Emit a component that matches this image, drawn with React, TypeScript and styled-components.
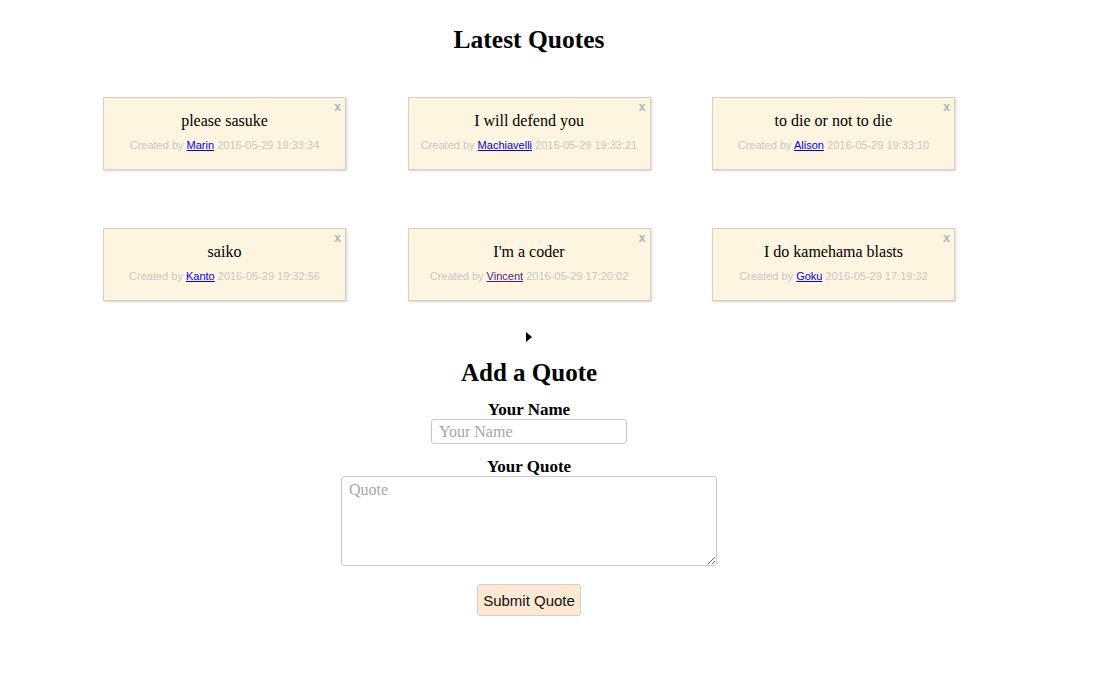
import React from "react";
import styled, { createGlobalStyle } from "styled-components";

const Global = createGlobalStyle`
  html, body { margin: 0; padding: 0; background: #fff; }
  body { font-family: "Liberation Serif", "Times New Roman", serif; color: #000; }
`;

const Page = styled.div`
  width: 1042px;
  margin: 0 0 0 8px;
  padding-top: 26px;
  display: flex;
  flex-direction: column;
  align-items: center;
`;

const Title = styled.h2`
  margin: 0;
  font-size: 25.5px;
  line-height: 28px;
  font-weight: bold;
`;

const Grid = styled.div`
  margin-top: 43px;
  display: grid;
  grid-template-columns: repeat(3, 243px);
  column-gap: 61.5px;
  row-gap: 58px;
`;

const Card = styled.div`
  position: relative;
  box-sizing: border-box;
  height: 73px;
  background: #fdf5df;
  border: 1px solid #d4d0c8;
  box-shadow: 1px 1px 2px rgba(0, 0, 0, 0.18);
  text-align: center;
  padding-top: 13px;
`;

const Close = styled.span`
  position: absolute;
  top: 2px;
  right: 4px;
  font-family: "Liberation Sans", Arial, sans-serif;
  font-size: 12px;
  font-weight: bold;
  color: #b3b3b3;
`;

const QuoteText = styled.div`
  font-size: 16px;
  line-height: 20px;
`;

const Meta = styled.div`
  margin-top: 7px;
  font-family: "Liberation Sans", Arial, sans-serif;
  font-size: 11px;
  line-height: 14px;
  color: #c8c8c8;
`;

const Author = styled.a<{ $visited?: boolean }>`
  color: ${(p) => (p.$visited ? "#551a8b" : "#0000ee")};
  text-decoration: underline;
`;

const Toggle = styled.div`
  margin-top: 31px;
  width: 0;
  height: 0;
  border-top: 5px solid transparent;
  border-bottom: 5px solid transparent;
  border-left: 6px solid #000;
`;

const SubTitle = styled(Title)`
  margin-top: 17px;
  font-size: 25px;
`;

const Label = styled.label<{ $top: number }>`
  display: block;
  margin-top: ${(p) => p.$top}px;
  font-size: 17px;
  line-height: 16px;
  font-weight: bold;
`;

const NameInput = styled.input`
  box-sizing: border-box;
  width: 196px;
  height: 25px;
  margin-top: 1px;
  border: 1px solid #c9c9c9;
  border-radius: 3px;
  padding: 1px 7px;
  font-family: "Liberation Serif", serif;
  font-size: 16px;
  outline: none;
  &::placeholder { color: #a6a6a6; }
`;

const QuoteArea = styled.textarea`
  box-sizing: border-box;
  width: 376px;
  height: 90px;
  margin-top: 1px;
  border: 1px solid #c9c9c9;
  border-radius: 3px;
  padding: 4px 7px;
  font-family: "Liberation Serif", serif;
  font-size: 16px;
  outline: none;
  resize: both;
  &::placeholder { color: #a6a6a6; }
`;

const Submit = styled.button`
  margin-top: 18px;
  box-sizing: border-box;
  width: 104px;
  height: 32px;
  background: #fde9d3;
  border: 1px solid #cfcfcf;
  border-radius: 3px;
  font-family: "Liberation Sans", Arial, sans-serif;
  font-size: 15px;
  color: #111;
  padding: 0;
`;

const Form = styled.div`
  display: flex;
  flex-direction: column;
  align-items: center;
`;

type Q = { text: string; author: string; date: string; visited?: boolean };

const quotes: Q[] = [
  { text: "please sasuke", author: "Marin", date: "2016-05-29 19:33:34" },
  { text: "I will defend you", author: "Machiavelli", date: "2016-05-29 19:33:21" },
  { text: "to die or not to die", author: "Alison", date: "2016-05-29 19:33:10" },
  { text: "saiko", author: "Kanto", date: "2016-05-29 19:32:56" },
  { text: "I'm a coder", author: "Vincent", date: "2016-05-29 17:20:02", visited: true },
  { text: "I do kamehama blasts", author: "Goku", date: "2016-05-29 17:19:32" },
];

export default function App() {
  return (
    <>
      <Global />
      <Page>
        <Title>Latest Quotes</Title>
        <Grid>
          {quotes.map((q) => (
            <Card key={q.author}>
              <Close>x</Close>
              <QuoteText>{q.text}</QuoteText>
              <Meta>
                Created by <Author href="#" $visited={q.visited}>{q.author}</Author> {q.date}
              </Meta>
            </Card>
          ))}
        </Grid>
        <Toggle />
        <SubTitle>Add a Quote</SubTitle>
        <Form>
          <Label $top={15}>Your Name</Label>
          <NameInput placeholder="Your Name" />
          <Label $top={15}>Your Quote</Label>
          <QuoteArea placeholder="Quote" />
          <Submit>Submit Quote</Submit>
        </Form>
      </Page>
    </>
  );
}
